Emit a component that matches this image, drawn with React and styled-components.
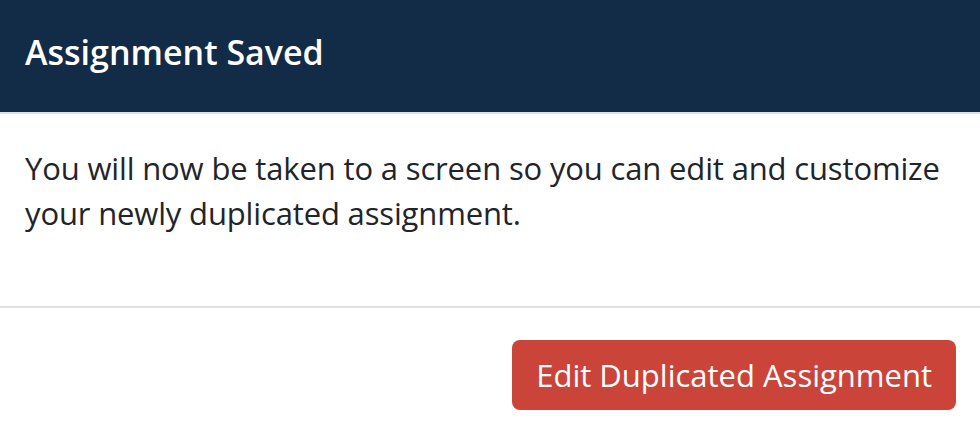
import React from "react";
import styled, { createGlobalStyle } from "styled-components";

const Global = createGlobalStyle`
  html, body { margin: 0; padding: 0; background: #ffffff; }
  body { font-family: "Open Sans", "Noto Sans", sans-serif; }
`;

const Modal = styled.div`
  width: 980px;
  height: 434px;
  display: flex;
  flex-direction: column;
  background: #ffffff;
  overflow: hidden;
`;

const Header = styled.header`
  height: 112px;
  display: flex;
  align-items: center;
  padding: 0 25px;
  background: #122c47;
  border-bottom: 2px solid #dee2e6;
  box-sizing: content-box;
  flex-shrink: 0;
`;

const Title = styled.h1`
  margin: 0;
  font-size: 34px;
  font-weight: 600;
  color: #ffffff;
  transform: translateY(-4px);
`;

const Body = styled.section`
  height: 194px;
  box-sizing: border-box;
  padding: 32px 25px 0;
  border-bottom: 2px solid #dee2e6;
  flex-shrink: 0;
`;

const Text = styled.p`
  margin: 0;
  font-size: 31px;
  line-height: 45px;
  letter-spacing: -0.15px;
  color: #212529;
`;

const Footer = styled.footer`
  flex: 1;
  display: flex;
  justify-content: flex-end;
  align-items: flex-start;
  padding: 32px 24px 0;
`;

const Button = styled.button`
  height: 70px;
  padding: 0 24px;
  border: none;
  border-radius: 8px;
  background: #cb443a;
  color: #ffffff;
  font-family: inherit;
  font-size: 31px;
  cursor: pointer;
`;

export default function App() {
  return (
    <>
      <Global />
      <Modal>
        <Header>
          <Title>Assignment Saved</Title>
        </Header>
        <Body>
          <Text>
            You will now be taken to a screen so you can edit and customize
            your newly duplicated assignment.
          </Text>
        </Body>
        <Footer>
          <Button>Edit Duplicated Assignment</Button>
        </Footer>
      </Modal>
    </>
  );
}
